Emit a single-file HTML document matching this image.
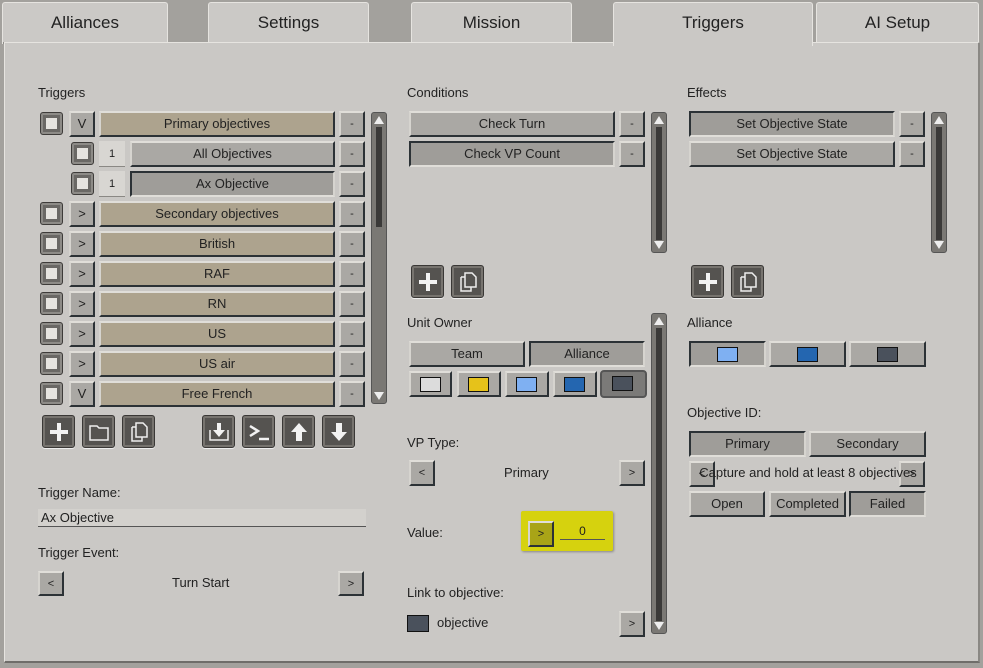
<!DOCTYPE html>
<html><head><meta charset="utf-8"><style>
*{box-sizing:border-box;margin:0;padding:0}
body{width:983px;height:668px;background:#a3a19d;position:relative;overflow:hidden;font-family:"Liberation Sans",sans-serif;font-size:13px;color:#1e1e1e}
.a{position:absolute}
.tab{position:absolute;top:2px;height:42px;background:#cbc9c6;border:1px solid #e6e4e0;border-bottom:none;border-radius:3px 3px 0 0;text-align:center;line-height:40px;font-size:17px;color:#222;box-shadow:inset 0 -2px 0 #8e8c88}
.panel{position:absolute;left:4px;top:42px;width:976px;height:621px;background:#cac8c5;border:1px solid #e6e4e0;border-bottom:2px solid #6f6d6a;border-right:2px solid #8a8884}
.lbl{position:absolute;font-size:13px;color:#222}
.b{position:absolute;height:26px;background:#aaa8a4;border:2px solid #2c3236;border-top-color:#e0ded9;border-left-color:#d6d4cf;text-align:center;line-height:22px;font-size:13px;color:#222}
.p{border-color:#2c3236;border-bottom-color:#e0ded9;border-right-color:#d6d4cf;background:#9f9d99}
.t{background:#ada38e}
.sm{font-size:11px}
.cb{position:absolute;width:23px;height:23px;background:#6a6865;border:1px solid #3e3c3a;border-radius:3px;box-shadow:inset 0 0 0 2px #8d8b87}
.cb:after{content:"";position:absolute;left:5px;top:5px;width:11px;height:11px;background:#e6e4e0}
.num{position:absolute;width:26px;height:26px;background:#d8d6d2;border-bottom:1px solid #8a8884;text-align:center;line-height:26px;font-size:11px}
.ic{position:absolute;width:33px;height:33px;background:#555350;border-radius:3px;border:1px solid #3a3836;box-shadow:inset 0 0 0 2px #77746f,0 1px 0 #eee}
.ic svg{position:absolute;left:4px;top:4px}
.sb{position:absolute;width:16px;background:#7a7874;border:1px solid #555;border-radius:3px}
.sb i{position:absolute;left:4px;width:6px;background:#3a3938}
.sb b{position:absolute;left:2px;width:0;height:0;border-left:5px solid transparent;border-right:5px solid transparent}
.sw{position:absolute;border:1px solid #111}
</style></head><body>
<div class="tab" style="left:2px;width:166px">Alliances</div>
<div class="tab" style="left:208px;width:161px">Settings</div>
<div class="tab" style="left:411px;width:161px">Mission</div>
<div class="tab" style="left:816px;width:163px">AI Setup</div>
<div class="panel"></div>
<div class="tab" style="left:613px;width:200px;height:44px;box-shadow:none;border-bottom:none;background:#cac8c5">Triggers</div>

<div class="lbl" style="left:38px;top:85px">Triggers</div>
<div class="lbl" style="left:407px;top:85px">Conditions</div>
<div class="lbl" style="left:687px;top:85px">Effects</div>

<!-- trigger rows -->
<div class="cb" style="left:40px;top:112px"></div><div class="b" style="left:69px;top:111px;width:26px">V</div><div class="b t" style="left:99px;top:111px;width:236px">Primary objectives</div><div class="b sm" style="left:339px;top:111px;width:26px">-</div>
<div class="cb" style="left:71px;top:142px"></div><div class="num" style="left:99px;top:141px">1</div><div class="b" style="left:130px;top:141px;width:205px">All Objectives</div><div class="b sm" style="left:339px;top:141px;width:26px">-</div>
<div class="cb" style="left:71px;top:172px"></div><div class="num" style="left:99px;top:171px">1</div><div class="b p" style="left:130px;top:171px;width:205px">Ax Objective</div><div class="b sm" style="left:339px;top:171px;width:26px">-</div>
<div class="cb" style="left:40px;top:202px"></div><div class="b" style="left:69px;top:201px;width:26px">&gt;</div><div class="b t" style="left:99px;top:201px;width:236px">Secondary objectives</div><div class="b sm" style="left:339px;top:201px;width:26px">-</div>
<div class="cb" style="left:40px;top:232px"></div><div class="b" style="left:69px;top:231px;width:26px">&gt;</div><div class="b t" style="left:99px;top:231px;width:236px">British</div><div class="b sm" style="left:339px;top:231px;width:26px">-</div>
<div class="cb" style="left:40px;top:262px"></div><div class="b" style="left:69px;top:261px;width:26px">&gt;</div><div class="b t" style="left:99px;top:261px;width:236px">RAF</div><div class="b sm" style="left:339px;top:261px;width:26px">-</div>
<div class="cb" style="left:40px;top:292px"></div><div class="b" style="left:69px;top:291px;width:26px">&gt;</div><div class="b t" style="left:99px;top:291px;width:236px">RN</div><div class="b sm" style="left:339px;top:291px;width:26px">-</div>
<div class="cb" style="left:40px;top:322px"></div><div class="b" style="left:69px;top:321px;width:26px">&gt;</div><div class="b t" style="left:99px;top:321px;width:236px">US</div><div class="b sm" style="left:339px;top:321px;width:26px">-</div>
<div class="cb" style="left:40px;top:352px"></div><div class="b" style="left:69px;top:351px;width:26px">&gt;</div><div class="b t" style="left:99px;top:351px;width:236px">US air</div><div class="b sm" style="left:339px;top:351px;width:26px">-</div>
<div class="cb" style="left:40px;top:382px"></div><div class="b" style="left:69px;top:381px;width:26px">V</div><div class="b t" style="left:99px;top:381px;width:236px">Free French</div><div class="b sm" style="left:339px;top:381px;width:26px">-</div>
<div class="sb" style="left:371px;top:112px;height:292px"><i style="top:14px;height:100px"></i><b style="top:3px;border-bottom:8px solid #eee"></b><b style="bottom:3px;border-top:8px solid #eee"></b></div>

<!-- icon buttons -->
<div class="ic" style="left:42px;top:415px"><svg width="24" height="24"><path d="M12 3v18M3 12h18" stroke="#f2f2f2" stroke-width="4"/></svg></div>
<div class="ic" style="left:82px;top:415px"><svg width="24" height="24"><path d="M3 6h7l2 2h9v12H3z" fill="none" stroke="#eee" stroke-width="1.5"/></svg></div>
<div class="ic" style="left:122px;top:415px"><svg width="24" height="24"><path d="M9 3h7l4 4v10H9z M5 7h4 M5 7v14h10v-4" fill="none" stroke="#eee" stroke-width="1.5"/></svg></div>
<div class="ic" style="left:202px;top:415px"><svg width="24" height="24"><path d="M3 10v10h18V10" fill="none" stroke="#eee" stroke-width="1.5"/><path d="M10 3h4v7h4l-6 7-6-7h4z" fill="#f2f2f2"/></svg></div>
<div class="ic" style="left:242px;top:415px"><svg width="24" height="24"><path d="M3 6l8 5-8 5" fill="none" stroke="#f2f2f2" stroke-width="2.5"/><path d="M12 19h10" stroke="#f2f2f2" stroke-width="2.5"/></svg></div>
<div class="ic" style="left:282px;top:415px"><svg width="24" height="24"><path d="M12 3l8 9h-5v9H9v-9H4z" fill="#f2f2f2"/></svg></div>
<div class="ic" style="left:322px;top:415px"><svg width="24" height="24"><path d="M12 21l8-9h-5V3H9v9H4z" fill="#f2f2f2"/></svg></div>

<div class="lbl" style="left:38px;top:485px">Trigger Name:</div>
<div class="a" style="left:38px;top:509px;width:328px;height:18px;background:#d3d1cd;border-bottom:1px solid #555;padding-left:3px;line-height:18px">Ax Objective</div>
<div class="lbl" style="left:38px;top:545px">Trigger Event:</div>
<div class="b sm" style="left:38px;top:571px;width:26px;height:25px">&lt;</div>
<div class="lbl" style="left:172px;top:575px">Turn Start</div>
<div class="b sm" style="left:338px;top:571px;width:26px;height:25px">&gt;</div>

<!-- conditions -->
<div class="b" style="left:409px;top:111px;width:206px">Check Turn</div><div class="b sm" style="left:619px;top:111px;width:26px">-</div>
<div class="b p" style="left:409px;top:141px;width:206px">Check VP Count</div><div class="b sm" style="left:619px;top:141px;width:26px">-</div>
<div class="sb" style="left:651px;top:112px;height:141px"><i style="top:14px;height:113px"></i><b style="top:3px;border-bottom:8px solid #eee"></b><b style="bottom:3px;border-top:8px solid #eee"></b></div>
<div class="ic" style="left:411px;top:265px"><svg width="24" height="24"><path d="M12 3v18M3 12h18" stroke="#f2f2f2" stroke-width="4"/></svg></div>
<div class="ic" style="left:451px;top:265px"><svg width="24" height="24"><path d="M9 3h7l4 4v10H9z M5 7h4 M5 7v14h10v-4" fill="none" stroke="#eee" stroke-width="1.5"/></svg></div>
<div class="lbl" style="left:407px;top:315px">Unit Owner</div>
<div class="b" style="left:409px;top:341px;width:116px">Team</div>
<div class="b p" style="left:529px;top:341px;width:116px">Alliance</div>
<div class="b" style="left:409px;top:371px;width:43px"></div><div class="sw" style="left:420px;top:377px;width:21px;height:15px;background:#dcdcdc"></div>
<div class="b" style="left:457px;top:371px;width:44px"></div><div class="sw" style="left:468px;top:377px;width:21px;height:15px;background:#e6c21a"></div>
<div class="b" style="left:505px;top:371px;width:44px"></div><div class="sw" style="left:516px;top:377px;width:21px;height:15px;background:#7fb0f2"></div>
<div class="b" style="left:553px;top:371px;width:44px"></div><div class="sw" style="left:564px;top:377px;width:21px;height:15px;background:#2466b0"></div>
<div class="b" style="left:600px;top:370px;width:47px;height:28px;background:#7b7a78;border-radius:4px;border-color:#555"></div><div class="sw" style="left:612px;top:376px;width:21px;height:15px;background:#4a515c"></div>
<div class="sb" style="left:651px;top:313px;height:321px"><i style="top:14px;height:293px"></i><b style="top:3px;border-bottom:8px solid #eee"></b><b style="bottom:3px;border-top:8px solid #eee"></b></div>
<div class="lbl" style="left:407px;top:435px">VP Type:</div>
<div class="b sm" style="left:409px;top:460px;width:26px">&lt;</div>
<div class="lbl" style="left:504px;top:465px">Primary</div>
<div class="b sm" style="left:619px;top:460px;width:26px">&gt;</div>
<div class="lbl" style="left:407px;top:525px">Value:</div>
<div class="a" style="left:521px;top:511px;width:92px;height:40px;background:#d6d20e;border-radius:2px;box-shadow:1px 1px 2px #888"></div>
<div class="b sm" style="left:528px;top:521px;width:26px;background:#a9a417">&gt;</div>
<div class="a" style="left:560px;top:520px;width:45px;height:20px;border-bottom:1px solid #555;text-align:center;font-size:12px;line-height:22px">0</div>
<div class="lbl" style="left:407px;top:585px">Link to objective:</div>
<div class="sw" style="left:407px;top:615px;width:22px;height:17px;background:#4a515c"></div>
<div class="lbl" style="left:437px;top:615px">objective</div>
<div class="b sm" style="left:619px;top:611px;width:26px">&gt;</div>

<!-- effects -->
<div class="b p" style="left:689px;top:111px;width:206px">Set Objective State</div><div class="b sm" style="left:899px;top:111px;width:26px">-</div>
<div class="b" style="left:689px;top:141px;width:206px">Set Objective State</div><div class="b sm" style="left:899px;top:141px;width:26px">-</div>
<div class="sb" style="left:931px;top:112px;height:141px"><i style="top:14px;height:113px"></i><b style="top:3px;border-bottom:8px solid #eee"></b><b style="bottom:3px;border-top:8px solid #eee"></b></div>
<div class="ic" style="left:691px;top:265px"><svg width="24" height="24"><path d="M12 3v18M3 12h18" stroke="#f2f2f2" stroke-width="4"/></svg></div>
<div class="ic" style="left:731px;top:265px"><svg width="24" height="24"><path d="M9 3h7l4 4v10H9z M5 7h4 M5 7v14h10v-4" fill="none" stroke="#eee" stroke-width="1.5"/></svg></div>
<div class="lbl" style="left:687px;top:315px">Alliance</div>
<div class="b p" style="left:689px;top:341px;width:77px"></div><div class="sw" style="left:717px;top:347px;width:21px;height:15px;background:#7fb0f2"></div>
<div class="b" style="left:769px;top:341px;width:77px"></div><div class="sw" style="left:797px;top:347px;width:21px;height:15px;background:#2466b0"></div>
<div class="b" style="left:849px;top:341px;width:77px"></div><div class="sw" style="left:877px;top:347px;width:21px;height:15px;background:#4a515c"></div>
<div class="lbl" style="left:687px;top:405px">Objective ID:</div>
<div class="b p" style="left:689px;top:431px;width:117px">Primary</div>
<div class="b" style="left:809px;top:431px;width:117px">Secondary</div>
<div class="b sm" style="left:689px;top:461px;width:26px">&lt;</div>
<div class="b sm" style="left:899px;top:461px;width:26px">&gt;</div>
<div class="lbl" style="left:693px;top:465px;width:230px;text-align:center;white-space:nowrap">Capture and hold at least 8 objectives</div>
<div class="b" style="left:689px;top:491px;width:76px">Open</div>
<div class="b" style="left:769px;top:491px;width:77px">Completed</div>
<div class="b p" style="left:849px;top:491px;width:77px">Failed</div>
</body></html>
